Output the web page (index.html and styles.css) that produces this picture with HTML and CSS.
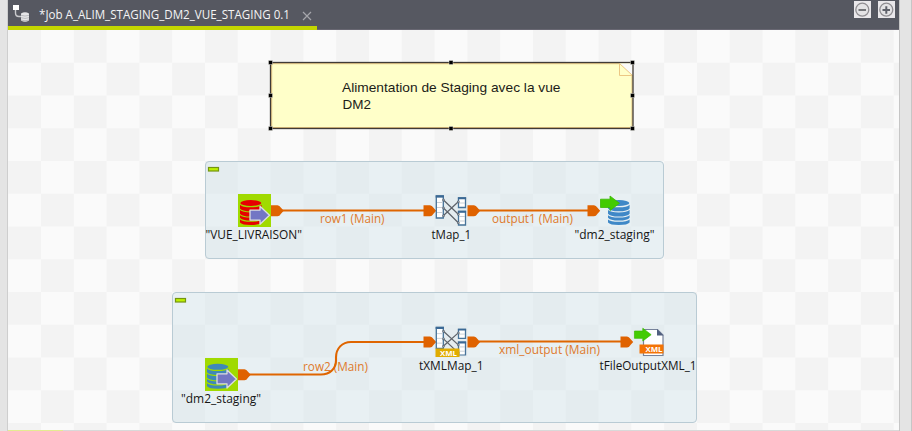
FILE: index.html
```html
<!DOCTYPE html>
<html lang="fr">
<head>
<meta charset="utf-8">
<title>Job A_ALIM_STAGING_DM2_VUE_STAGING 0.1</title>
<link rel="stylesheet" href="styles.css">
</head>
<body>
<main class="editor">
  <header class="tabbar">
    <div class="tab">
      <svg class="job-icon" width="18" height="18" viewBox="0 0 18 18">
        <path d="M3.500 5v4q0 3.500 3.500 3.500h2" fill="none" stroke="#c9cacd" stroke-width="1.400"/>
        <rect x="1" y="1" width="6" height="5" fill="#fff"/>
        <path d="M9 9.500q4-2.500 8 0v7q-4 2.500-8 0z" fill="#e6e6e8"/>
        <path d="M9 11.300q4 1.500 8 0M9 13.700q4 1.500 8 0M9 16q4 1.500 8 0" fill="none" stroke="#a6a7ac" stroke-width=".7"/>
      </svg>
      <svg class="tab-title" width="252" height="26"><text x="0" y="18.500" textLength="251" lengthAdjust="spacingAndGlyphs">*Job A_ALIM_STAGING_DM2_VUE_STAGING 0.1</text></svg>
      <svg class="close" width="10" height="10"><path d="M1 1l8 8M9 1L1 9" stroke="#a5a6ab" stroke-width="1.200"/></svg>
    </div>
    <div class="tools">
      <svg width="17" height="17"><rect width="17" height="17" fill="#eae8eb"/><circle cx="8.300" cy="8.700" r="6.500" fill="#e4e3e5" stroke="#8f8d91" stroke-width="1.300"/><path d="M4.500 9h7.500" stroke="#747579" stroke-width="2"/></svg>
      <svg width="17" height="17"><rect width="17" height="17" fill="#eae8eb"/><circle cx="8.300" cy="8.700" r="6.500" fill="#e4e3e5" stroke="#8f8d91" stroke-width="1.300"/><path d="M4.500 9h7.500M8.300 5.200v7.500" stroke="#5f616a" stroke-width="2"/></svg>
    </div>
  </header>
  <section class="canvas">
    <svg class="diagram" width="891" height="400" viewBox="8 30 891 400">
      <defs>
        <path id="port" d="M0-5.500h6.500q2 0 3.500 2.500l2.700 3-2.700 3q-1.500 2.500-3.500 2.500H0z"/>
        <g id="db">
          <ellipse cx="10.800" cy="3" rx="10.500" ry="3"/>
          <path d="M0 4.700q2.500 2.600 10.800 2.600t10.800-2.600v3.700q-2 2.800-10.800 2.800T0 8.400zM0 10q2.500 2.400 10.800 2.400t10.800-2.400v3.700q-2 2.800-10.800 2.800T0 13.700zM0 15.200q2.500 2.400 10.800 2.400t10.800-2.400v2.500q-2 2.800-10.800 2.800T0 17.700zM0 19.500q2.500 2.300 10.800 2.300t10.800-2.300v3q-2 2.500-10.800 2.500T0 22.500z"/>
        </g>
        <path id="arrow-in" d="M0 3.800h10V0L19.500 9 10 18v-4.200H0z" fill="#7376c4" stroke="#dcdde0" stroke-width="1.300" stroke-linejoin="round"/>
        <path id="arrow-out" d="M.5 3.700h9.500V.5l9.500 7.300-9.500 7.200v-3H.5z" fill="#43cb02" stroke="#3bb904" stroke-width=".8" stroke-linejoin="round"/>
        <g id="map">
          <path d="M.8 1h7v22h-7z" fill="#fff" stroke="#467399" stroke-width="1.300"/>
          <path d="M.2 1.500h8.200" stroke="#3b6995" stroke-width="2.300"/>
          <path d="M1.500 7.500h6M1.500 12.500h6M1.500 17.500h6" stroke="#c4cbd1" stroke-width=".9"/>
          <path d="M23 3h7v9.500h-7zM23 16.500h7V30h-7z" fill="#fff" stroke="#467399" stroke-width="1.300"/>
          <path d="M22.400 3.300h8.200M22.400 16.800h8.200" stroke="#3b6995" stroke-width="2"/>
          <path d="M23.500 8h6M23.500 21.500h6M23.500 26h6" stroke="#c4cbd1" stroke-width=".9"/>
          <path d="M8 5l14.500 14M8 13l14.500 14.500M8 20.500L22.500 7" fill="none" stroke="#5d6269" stroke-width="1.200"/>
          <path d="M7.200 4.200h1.600v1.600H7.200zM7.200 12.200h1.600v1.600H7.200zM7.200 20h1.600v1.600H7.200zM22 6h1.600v1.600H22zM22 18.500h1.600v1.600H22zM22 27h1.600v1.600H22z" fill="#f5f7f8" stroke="#59636e" stroke-width=".8"/>
        </g>
        <g id="collapse"><rect x=".5" y=".5" width="10" height="3.500" fill="#bdf000" stroke="#749510" stroke-width="1.200"/></g>
      </defs>

      <rect class="note" x="271" y="62.500" width="362" height="66"/>
      <path d="M620 63.500h12.500V76z" fill="#fafafa"/>
      <path d="M619.500 63.500v12h13z" fill="#ffffc9" stroke="#ecc784"/>
      <path d="M271.700 127.500V63.700H619M632 76v51.500H272" fill="none" stroke="#dfbf7c"/>
      <rect class="note-border" x="270.500" y="62.500" width="362.500" height="66"/>
      <path class="handles" d="M268.500 60.500h4v4h-4zM449 60.500h4v4h-4zM630.500 60.500h4v4h-4zM268.500 93.500h4v4h-4zM630.500 93.500h4v4h-4zM268.500 126.500h4v4h-4zM449 126.500h4v4h-4zM630.500 126.500h4v4h-4z"/>
      <text class="note-text" x="342" y="92" textLength="218.500" lengthAdjust="spacingAndGlyphs">Alimentation de Staging avec la vue</text>
      <text class="note-text" x="342.500" y="108.500" textLength="28.500" lengthAdjust="spacingAndGlyphs">DM2</text>

      <rect class="subjob" x="205.500" y="161.500" width="458" height="97" rx="3.500"/>
      <use href="#collapse" x="208" y="167"/>
      <path class="link" d="M280 210.500h146M478 210.500h112"/>
      <g class="ports"><use href="#port" x="271" y="210.700"/><use href="#port" x="423.500" y="210.700"/><use href="#port" x="467.500" y="210.700"/><use href="#port" x="587.500" y="210.700"/></g>
      <rect class="start" x="238" y="194" width="33" height="33"/>
      <use href="#db" x="240" y="200" fill="#e60000"/>
      <use href="#arrow-in" x="250" y="206.300"/>
      <use href="#map" x="435.500" y="195"/>
      <use href="#db" x="608" y="200" fill="#3f88c7"/>
      <use href="#arrow-out" x="600" y="195.500"/>
      <text class="link-label" x="320" y="223" textLength="64.500" lengthAdjust="spacingAndGlyphs">row1 (Main)</text>
      <text class="link-label" x="492" y="223" textLength="81" lengthAdjust="spacingAndGlyphs">output1 (Main)</text>
      <text class="label" x="205.500" y="239" textLength="96.500" lengthAdjust="spacingAndGlyphs">"VUE_LIVRAISON"</text>
      <text class="label" x="431.500" y="239" textLength="39.500" lengthAdjust="spacingAndGlyphs">tMap_1</text>
      <text class="label" x="574.500" y="239" textLength="80" lengthAdjust="spacingAndGlyphs">"dm2_staging"</text>

      <rect class="subjob" x="172.500" y="292.500" width="524" height="130" rx="3.500"/>
      <use href="#collapse" x="175" y="298"/>
      <text class="link-label" x="303" y="370.500" textLength="65" lengthAdjust="spacingAndGlyphs">row2 (Main)</text>
      <path class="link" d="M248 374.500h73c9 0 15-6 15-14v-3c0-9 6-15.500 15-15.500h74M479 341.500h144"/>
      <g class="ports"><use href="#port" x="238" y="374.700"/><use href="#port" x="423.500" y="342"/><use href="#port" x="467.500" y="342"/><use href="#port" x="620.500" y="342"/></g>
      <rect class="start" x="205" y="358" width="33" height="33"/>
      <use href="#db" x="207" y="363.800" fill="#3f88b8"/>
      <use href="#arrow-in" x="217" y="370"/>
      <use href="#map" transform="translate(435.500 326.500) scale(1 .95)"/>
      <rect x="435.500" y="348.500" width="24" height="8.500" fill="#e0ac00"/>
      <text class="badge" x="440" y="356" textLength="17" lengthAdjust="spacingAndGlyphs">XML</text>
      <path d="M643.500 329.500h14l5.500 5.500v20.500h-19.500z" fill="#fff" stroke="#77839b" stroke-width="1.200"/>
      <path d="M657 329l6.500 6.500H657z" fill="#516080"/>
      <rect x="639.500" y="344.500" width="24" height="9" fill="#f37306"/>
      <text class="badge" x="645.500" y="352" textLength="17" lengthAdjust="spacingAndGlyphs">XML</text>
      <use href="#arrow-out" transform="translate(634 327.800) scale(.88)"/>
      <text class="link-label" x="499" y="354" textLength="101" lengthAdjust="spacingAndGlyphs">xml_output (Main)</text>
      <text class="label" x="181" y="403" textLength="80" lengthAdjust="spacingAndGlyphs">"dm2_staging"</text>
      <text class="label" x="419" y="370" textLength="64.500" lengthAdjust="spacingAndGlyphs">tXMLMap_1</text>
      <text class="label" x="599.500" y="370" textLength="97" lengthAdjust="spacingAndGlyphs">tFileOutputXML_1</text>
    </svg>
  </section>
  <footer class="bottom"></footer>
</main>
</body>
</html>
```
FILE: styles.css
```css
* { box-sizing: border-box; }
body { margin: 0; height: 431px; overflow: hidden; background: #e4e4e4; display: flex; }
svg { display: block; flex: none; }
.editor {
  width: 893px; height: 431px; margin-left: 7px;
  border-left: 1px solid #cecece; border-right: 1px solid #c6c6c6;
  display: flex; flex-direction: column;
}
body::after { content: ""; width: 1px; margin-left: auto; background: #c6c6c6; }
.tabbar {
  height: 30px; flex: none; background: #565861; border-bottom: 1px solid #686772;
  display: flex; justify-content: space-between; align-items: flex-start;
}
.tab {
  width: 309px; height: 30px; border-bottom: 4px solid #c3d600;
  display: flex; align-items: flex-start; padding-left: 4px;
}
.job-icon { margin-top: 4px; }
.tab-title { margin-left: 9px; overflow: visible; }
.tab-title text { font: 12px "Open Sans", "Noto Sans", sans-serif; fill: #f4f4f5; }
.close { margin: 11px 0 0 11px; }
.tools { display: flex; gap: 7px; padding: 1px 4px 0 0; }
.canvas {
  height: 400px; flex: none;
  background: conic-gradient(#f3f3f3 0 25%, #fafafa 0 50%, #f3f3f3 0 75%, #fafafa 0) -32.6px 0 / 65.6px 65.5px;
}
.bottom { height: 1px; background: linear-gradient(90deg, #e5eb91 55px, #d9d9d9 55px); }
.note { fill: #ffffc9; }
.note-border { fill: none; stroke: #3f3a36; stroke-width: 1.3; }
.handles { fill: #000; stroke: #f8f8f0; stroke-width: .4; }
.note-text { font: 13.3px "Liberation Sans", Arial, sans-serif; fill: #1c1c18; }
.subjob { fill: rgba(214, 230, 236, .5); stroke: #b9cbd4; }
.start { fill: #a0da00; }
.link { fill: none; stroke: #df6500; stroke-width: 2.1; }
.ports { fill: #df6200; }
.label, .link-label { font: 12px "Open Sans", "Noto Sans", sans-serif; fill: #151515; }
.link-label { fill: #df7a2c; }
.badge { font: bold 7.5px "Open Sans", sans-serif; fill: #fff; }
```
